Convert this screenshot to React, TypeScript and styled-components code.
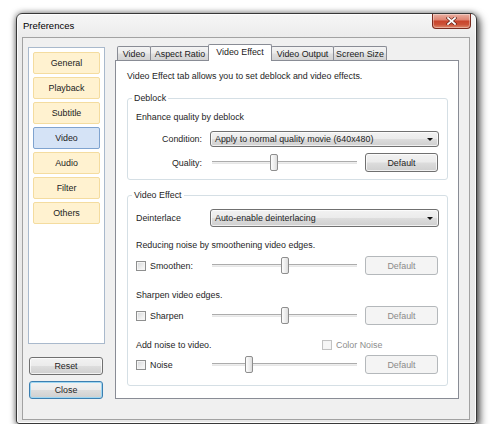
import React from "react";
import styled, { createGlobalStyle } from "styled-components";

const GlobalStyle = createGlobalStyle`
  html, body { margin: 0; padding: 0; background: #ffffff; }
  body {
    font-family: "Liberation Sans", Arial, sans-serif;
    font-size: 8.9px;
    color: #1e1e1e;
  }
  * { box-sizing: border-box; }
`;

/* ---------- window chrome ---------- */

const Window = styled.div`
  margin: 13px 0 0 16px;
  width: 461px;
  height: 411px;
  border: 1px solid #383838;
  border-radius: 6px 6px 3px 3px;
  background: linear-gradient(180deg, #f6f6f6 0%, #ebebeb 6%, #e7e7e7 100%);
  box-shadow: 0 0 6px rgba(0, 0, 0, 0.5), 3px 4px 8px rgba(0, 0, 0, 0.6),
    inset 0 0 0 1px rgba(255, 255, 255, 0.9);
  padding: 0 6px 3px 5px;
  display: flex;
  flex-direction: column;
`;

const TitleBar = styled.div`
  height: 23px;
  flex: none;
  display: flex;
  align-items: flex-start;
`;

const Title = styled.div`
  font-size: 9.5px;
  line-height: 11px;
  color: #000;
  padding: 6px 0 0 1px;
`;

const CloseButton = styled.div`
  margin-left: auto;
  margin-right: -1px;
  width: 39px;
  height: 15px;
  border: 1px solid #7a2a1e;
  border-top: none;
  border-radius: 0 0 4px 4px;
  background: linear-gradient(
    180deg,
    #eab0a2 0%,
    #df8674 40%,
    #c9442c 52%,
    #cc5238 75%,
    #de8a6c 100%
  );
  box-shadow: inset 0 0 0 1px rgba(255, 255, 255, 0.35);
  display: flex;
  align-items: center;
  justify-content: center;
`;

const Client = styled.div`
  flex: 1;
  border: 1px solid #a2a2a2;
  background: #f0f0f0;
  display: flex;
  padding: 6px 10px 20px 5px;
  gap: 10px;
`;

/* ---------- left navigation ---------- */

const LeftColumn = styled.div`
  width: 77px;
  flex: none;
  margin-top: 3px;
  display: flex;
  flex-direction: column;
`;

const NavPanel = styled.div`
  height: 297px;
  border: 1px solid #a9b9cc;
  background: #ffffff;
  padding: 4px;
  display: flex;
  flex-direction: column;
  gap: 3px;
`;

const NavItem = styled.div<{ $active?: boolean }>`
  height: 22px;
  border: 1px solid ${(p) => (p.$active ? "#7fa3cf" : "#f4dc9f")};
  border-radius: 2px;
  background: ${(p) => (p.$active ? "#d5e3f6" : "#fff2d0")};
  display: flex;
  align-items: center;
  justify-content: center;
  color: #222;
`;

const PushButton = styled.div<{ $default?: boolean; $disabled?: boolean }>`
  height: ${(p) => (p.$default !== undefined ? 18 : 19)}px;
  border: 1px solid
    ${(p) => (p.$disabled ? "#b4b8bb" : p.$default ? "#3c7fb1" : "#707070")};
  border-radius: 3px;
  background: ${(p) =>
    p.$disabled
      ? "#f4f4f4"
      : "linear-gradient(180deg, #f2f2f2 0%, #ebebeb 49%, #dddddd 51%, #cfcfcf 100%)"};
  box-shadow: ${(p) =>
    p.$default
      ? "inset 0 0 0 1px #9fd7f2"
      : p.$disabled
      ? "none"
      : "inset 0 0 0 1px rgba(255,255,255,0.7)"};
  color: ${(p) => (p.$disabled ? "#8a8a8a" : "#1e1e1e")};
  display: flex;
  align-items: center;
  justify-content: center;
`;

const SideButton = styled(PushButton)`
  width: 74px;
  margin-left: 1px;
  margin-top: ${(p) => (p.$default ? 6 : 13)}px;
`;

/* ---------- tab control ---------- */

const TabArea = styled.div`
  flex: 1;
  display: flex;
  flex-direction: column;
`;

const TabStrip = styled.div`
  height: 16px;
  flex: none;
  display: flex;
  align-items: flex-end;
  padding-left: 2px;
`;

const Tab = styled.div<{ $w: number; $selected?: boolean; $ml: number; $mr?: number }>`
  position: relative;
  z-index: ${(p) => (p.$selected ? 2 : 1)};
  width: ${(p) => p.$w}px;
  height: ${(p) => (p.$selected ? 17 : 14)}px;
  margin-left: ${(p) => p.$ml}px;
  margin-right: ${(p) => p.$mr ?? 0}px;
  margin-bottom: ${(p) => (p.$selected ? -1 : 0)}px;
  border: 1px solid #898c95;
  border-bottom: none;
  border-radius: 2px 2px 0 0;
  background: ${(p) =>
    p.$selected
      ? "#ffffff"
      : "linear-gradient(180deg, #f4f4f4 0%, #ebebeb 49%, #dfdfdf 51%, #d3d3d3 100%)"};
  display: flex;
  align-items: ${(p) => (p.$selected ? "flex-start" : "center")};
  padding-top: ${(p) => (p.$selected ? 2 : 0)}px;
  justify-content: center;
  white-space: nowrap;
  color: #1a1a1a;
`;

const TabPanel = styled.div`
  flex: 1;
  border: 1px solid #898c95;
  background: #ffffff;
  padding: 9px 10px 0 11px;
`;

const TextLine = styled.div<{ $mt?: number }>`
  line-height: 12px;
  margin-top: ${(p) => p.$mt ?? 0}px;
  white-space: nowrap;
`;

/* ---------- group boxes ---------- */

const Group = styled.fieldset<{ $mt: number; $pt: number; $pb: number }>`
  margin: ${(p) => p.$mt}px 0 0 0;
  min-width: 0;
  border: 1px solid #d5dfe5;
  border-radius: 3px;
  padding: ${(p) => p.$pt}px 0 ${(p) => p.$pb}px 8px;
`;

const Legend = styled.legend`
  line-height: 12px;
  padding: 0 2px;
  margin-left: -4px;
`;

const Row = styled.div<{ $mt: number; $h: number }>`
  display: grid;
  grid-template-columns: 74px 155px 73px;
  align-items: center;
  height: ${(p) => p.$h}px;
  margin-top: ${(p) => p.$mt}px;
`;

const FieldLabel = styled.div<{ $right?: boolean }>`
  text-align: ${(p) => (p.$right ? "right" : "left")};
  padding-right: ${(p) => (p.$right ? 8 : 0)}px;
  white-space: nowrap;
`;

const Combo = styled.div<{ $h: number }>`
  grid-column: 2 / span 2;
  height: ${(p) => p.$h}px;
  border: 1px solid #707070;
  border-radius: 3px;
  background: linear-gradient(180deg, #f2f2f2 0%, #ebebeb 49%, #dddddd 51%, #cfcfcf 100%);
  box-shadow: inset 0 0 0 1px rgba(255, 255, 255, 0.7);
  display: flex;
  align-items: center;
  padding: 0 5px 0 4px;
  white-space: nowrap;
  margin-right: -1px;
`;

const ComboArrow = styled.span`
  margin-left: auto;
  width: 0;
  height: 0;
  border-left: 3px solid transparent;
  border-right: 3px solid transparent;
  border-top: 3px solid #111;
`;

const SliderBox = styled.div`
  position: relative;
  height: 17px;
  margin: 0 8px 0 2px;
  display: flex;
  align-items: center;
`;

const Track = styled.div`
  width: 100%;
  height: 3px;
  border-top: 1px solid #acacac;
  border-bottom: 1px solid #e6e6e6;
  background: #eeeeee;
`;

const Thumb = styled.div`
  position: absolute;
  top: 0;
  width: 8px;
  height: 17px;
  border: 1px solid #8e8e8e;
  border-radius: 2px;
  background: linear-gradient(90deg, #fdfdfd 0%, #ececec 60%, #dcdcdc 100%);
`;

const CheckWrap = styled.div<{ $disabled?: boolean }>`
  display: flex;
  align-items: center;
  gap: 4px;
  white-space: nowrap;
  color: ${(p) => (p.$disabled ? "#8d8d8d" : "#1e1e1e")};
`;

const Box = styled.span<{ $disabled?: boolean }>`
  width: 10px;
  height: 10px;
  flex: none;
  border: 1px solid ${(p) => (p.$disabled ? "#c2c2c2" : "#8e8f8f")};
  background: ${(p) =>
    p.$disabled
      ? "#f6f6f6"
      : "linear-gradient(135deg, #d4d6d9 0%, #eeeeee 60%, #fbfbfb 100%)"};
  box-shadow: inset 0 0 0 1px #f4f4f4;
`;

const NoiseLine = styled.div`
  display: grid;
  grid-template-columns: 186px auto;
  align-items: center;
  line-height: 12px;
  margin-top: 14px;
  white-space: nowrap;
`;

/* ---------- pieces ---------- */

const Slider: React.FC<{ value: number }> = ({ value }) => (
  <SliderBox>
    <Track />
    <Thumb style={{ left: `${Math.round(value * 137)}px` }} />
  </SliderBox>
);

const Check: React.FC<{ label: string; disabled?: boolean }> = ({ label, disabled }) => (
  <CheckWrap $disabled={disabled}>
    <Box $disabled={disabled} />
    {label}
  </CheckWrap>
);

const navItems = ["General", "Playback", "Subtitle", "Video", "Audio", "Filter", "Others"];

const tabs = [
  { label: "Video", w: 34, ml: 0 },
  { label: "Aspect Ratio", w: 60, ml: -1 },
  { label: "Video Effect", w: 64, ml: -2, mr: -1, selected: true },
  { label: "Video Output", w: 63, ml: 0 },
  { label: "Screen Size", w: 54, ml: -1 },
];

export default function App() {
  return (
    <>
      <GlobalStyle />
      <Window>
        <TitleBar>
          <Title>Preferences</Title>
          <CloseButton>
            <svg width="11" height="8" viewBox="0 0 11 8">
              <path d="M2 1 L9 7 M9 1 L2 7" stroke="#5a1a10" strokeWidth="3" strokeLinecap="square" />
              <path d="M2 1 L9 7 M9 1 L2 7" stroke="#ffffff" strokeWidth="1.8" strokeLinecap="square" />
            </svg>
          </CloseButton>
        </TitleBar>
        <Client>
          <LeftColumn>
            <NavPanel>
              {navItems.map((n) => (
                <NavItem key={n} $active={n === "Video"}>
                  {n}
                </NavItem>
              ))}
            </NavPanel>
            <SideButton $default={false}>Reset</SideButton>
            <SideButton $default>Close</SideButton>
          </LeftColumn>
          <TabArea>
            <TabStrip>
              {tabs.map((t) => (
                <Tab key={t.label} $w={t.w} $ml={t.ml} $mr={t.mr} $selected={t.selected}>
                  {t.label}
                </Tab>
              ))}
            </TabStrip>
            <TabPanel>
              <TextLine>Video Effect tab allows you to set deblock and video effects.</TextLine>

              <Group $mt={10} $pt={7} $pb={7}>
                <Legend>Deblock</Legend>
                <TextLine>Enhance quality by deblock</TextLine>
                <Row $mt={8} $h={16}>
                  <FieldLabel $right>Condition:</FieldLabel>
                  <Combo $h={16}>
                    Apply to normal quality movie (640x480)
                    <ComboArrow />
                  </Combo>
                </Row>
                <Row $mt={6} $h={19}>
                  <FieldLabel $right>Quality:</FieldLabel>
                  <Slider value={0.42} />
                  <PushButton>Default</PushButton>
                </Row>
              </Group>

              <Group $mt={9} $pt={8} $pb={11}>
                <Legend>Video Effect</Legend>
                <Row $mt={0} $h={18}>
                  <FieldLabel>Deinterlace</FieldLabel>
                  <Combo $h={18}>
                    Auto-enable deinterlacing
                    <ComboArrow />
                  </Combo>
                </Row>

                <TextLine $mt={12}>Reducing noise by smoothening video edges.</TextLine>
                <Row $mt={5} $h={19}>
                  <Check label="Smoothen:" />
                  <Slider value={0.5} />
                  <PushButton $disabled>Default</PushButton>
                </Row>

                <TextLine $mt={14}>Sharpen video edges.</TextLine>
                <Row $mt={5} $h={19}>
                  <Check label="Sharpen" />
                  <Slider value={0.5} />
                  <PushButton $disabled>Default</PushButton>
                </Row>

                <NoiseLine>
                  <span>Add noise to video.</span>
                  <Check label="Color Noise" disabled />
                </NoiseLine>
                <Row $mt={4} $h={19}>
                  <Check label="Noise" />
                  <Slider value={0.24} />
                  <PushButton $disabled>Default</PushButton>
                </Row>
              </Group>
            </TabPanel>
          </TabArea>
        </Client>
      </Window>
    </>
  );
}
